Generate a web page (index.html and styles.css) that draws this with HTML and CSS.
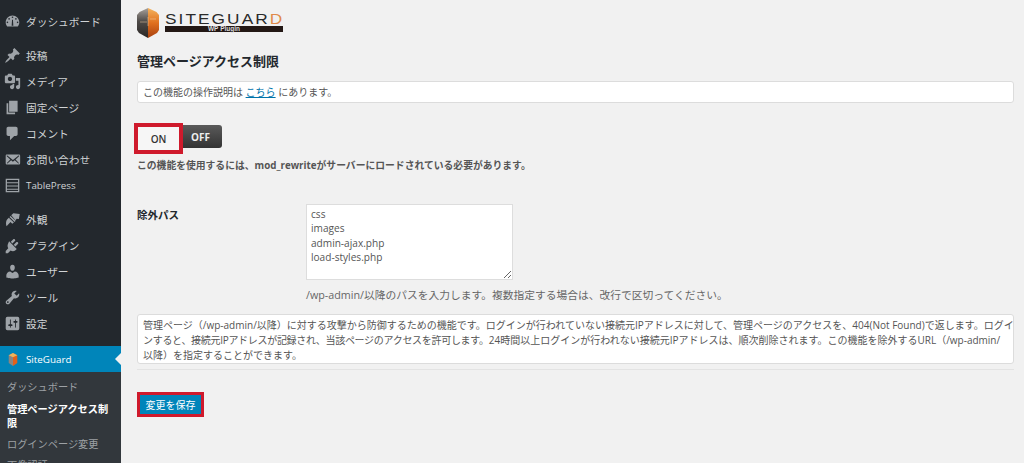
FILE: index.html
```html
<!DOCTYPE html>
<html lang="ja">
<head>
<meta charset="utf-8">
<title>SiteGuard</title>
<link rel="stylesheet" href="styles.css">
</head>
<body>
<div class="app">
<nav class="side">
  <ul class="menu first">
    <li><svg class="ic" viewBox="0 0 20 20"><path fill-rule="evenodd" d="M3.760 16h12.480c1.100-1.370 1.760-3.110 1.760-5 0-4.420-3.580-8-8-8s-8 3.580-8 8c0 1.890.66 3.630 1.760 5zM10 4c.55 0 1 .45 1 1s-.45 1-1 1-1-.45-1-1 .45-1 1-1zM6 6c.55 0 1 .45 1 1s-.45 1-1 1-1-.45-1-1 .45-1 1-1zm8 0c.55 0 1 .45 1 1s-.45 1-1 1-1-.45-1-1 .45-1 1-1zM4 10c.55 0 1 .45 1 1s-.45 1-1 1-1-.45-1-1 .45-1 1-1zm12 0c.55 0 1 .45 1 1s-.45 1-1 1-1-.45-1-1 .45-1 1-1zM9 15l.5-7h1l.5 7z"/></svg>ダッシュボード</li>
  </ul>
  <ul class="menu">
    <li><svg class="ic" viewBox="0 0 20 20"><path d="M10.440 3.020l1.820-1.820 6.360 6.350-1.830 1.820c-1.050-.68-2.480-.57-3.410.36l-.75.75c-.92.93-1.040 2.350-.35 3.400l-1.830 1.820-2.410-2.410-2.800 2.790c-.42.42-3.380 2.710-3.800 2.290s1.860-3.390 2.280-3.810l2.790-2.790L4.100 9.360l1.830-1.820c1.050.69 2.480.57 3.400-.36l.75-.75c.93-.92 1.050-2.350.36-3.410z"/></svg>投稿</li>
    <li><svg class="ic" viewBox="0 0 20 20"><path d="M13 11V4c0-.55-.45-1-1-1h-1.670L9 1H5L3.670 3H2c-.55 0-1 .45-1 1v7c0 .55.45 1 1 1h10c.55 0 1-.45 1-1zM7 4.500c1.380 0 2.500 1.120 2.500 2.500S8.380 9.500 7 9.500 4.500 8.380 4.500 7 5.620 4.500 7 4.500zM14 6h5v10.500c0 1.380-1.120 2.500-2.500 2.500S14 17.880 14 16.500s1.120-2.500 2.500-2.500c.17 0 .34.02.5.05V9h-3V6zm-4 8.050V13h2v3.500c0 1.380-1.120 2.500-2.500 2.500S7 17.880 7 16.500 8.120 14 9.500 14c.17 0 .34.02.5.05z"/></svg>メディア</li>
    <li><svg class="ic" viewBox="0 0 20 20"><path d="M6 15V2h10v13H6zm-1 1h8v2H3V5h2v11z"/></svg>固定ページ</li>
    <li><svg class="ic" viewBox="0 0 20 20"><path d="M5 2h9c1.100 0 2 .9 2 2v7c0 1.100-.9 2-2 2h-2l-5 5v-5H5c-1.100 0-2-.9-2-2V4c0-1.100.9-2 2-2z"/></svg>コメント</li>
    <li><svg class="ic" viewBox="0 0 20 20"><path d="M19 14.500v-9c0-.83-.67-1.500-1.500-1.500H3.490c-.83 0-1.500.67-1.500 1.500v9c0 .83.67 1.500 1.500 1.500H17.500c.83 0 1.500-.67 1.500-1.500zm-1.310-9.110c.33.33.15.67-.03.84L13.600 9.950l3.900 4.060c.12.14.2.36.06.51-.13.16-.43.15-.56.05l-4.370-3.730-2.140 1.950-2.130-1.950-4.370 3.730c-.13.1-.43.11-.56-.05-.14-.15-.06-.37.06-.51l3.900-4.060-4.060-3.720c-.18-.17-.36-.51-.03-.84s.67-.17.95.07l6.240 5.040 6.250-5.040c.28-.24.62-.4.95-.07z"/></svg>お問い合わせ</li>
    <li><svg class="ic" viewBox="0 0 20 20"><path fill-rule="evenodd" d="M2 2h16v16H2zm1.500 1.500v2.600h13V3.500zm0 3.800v2.600h13V7.300zm0 3.800v2.600h13v-2.600zm0 3.800v1.600h13v-1.600z"/></svg><span class="lat">TablePress</span></li>
  </ul>
  <ul class="menu">
    <li><svg class="ic" viewBox="0 0 20 20"><path d="M8.500 5L11 2.500l7.500 1-1 6-2.500-.5-1.500 2zM7.700 5.800l6 5.700-1.200 1.300-6-5.700zM5.700 8l6 5.600-2 1.400-2-2-4.700 5C1.500 13 3 10 5.700 8z"/></svg>外観</li>
    <li><svg class="ic" viewBox="0 0 20 20"><path d="M13.110 4.360L9.870 7.600 8 5.730l3.240-3.240c.35-.34 1.050-.2 1.560.31.52.51.66 1.210.31 1.560zM16.610 7.860L13.370 11.100 11.500 9.230l3.240-3.240c.35-.34 1.050-.2 1.560.31.52.51.66 1.210.31 1.560zM6 5l9 9-1.500 1.500c-1.700 1.400-4 1.500-5.700.4L4.500 19H2v-2.500l3-3.300C3.900 11.500 4 9 5 7.300z"/></svg>プラグイン</li>
    <li><svg class="ic" viewBox="0 0 20 20"><path d="M10 9.250c-2.270 0-2.730-3.440-2.730-3.440C7 4.020 7.820 2 9.970 2c2.160 0 2.980 2.020 2.710 3.810 0 0-.41 3.440-2.680 3.440zm0 2.570L12.720 10c2.390 0 4.520 2.330 4.520 4.530v2.490s-3.650 1.130-7.240 1.130c-3.650 0-7.240-1.130-7.240-1.130v-2.490c0-2.250 1.940-4.480 4.470-4.480z"/></svg>ユーザー</li>
    <li><svg class="ic" viewBox="0 0 20 20"><path fill-rule="evenodd" d="M16.680 9.770c-1.340 1.340-3.300 1.670-4.950.99l-5.410 6.520c-.99.99-2.590.99-3.580 0s-.99-2.590 0-3.570l6.520-5.420c-.68-1.650-.35-3.610.99-4.950 1.280-1.280 3.120-1.620 4.720-1.060l-2.890 2.890 2.820 2.820 2.860-2.870c.53 1.580.18 3.400-1.080 4.650zM3.810 16.210c.4.39 1.040.39 1.430 0 .4-.4.4-1.040 0-1.430-.39-.4-1.030-.4-1.430 0-.39.39-.39 1.030 0 1.430z"/></svg>ツール</li>
    <li><svg class="ic" viewBox="0 0 20 20"><path fill-rule="evenodd" d="M4 2h12a2 2 0 0 1 2 2v12a2 2 0 0 1-2 2H4a2 2 0 0 1-2-2V4a2 2 0 0 1 2-2zM8 11V5.500a.5.5 0 0 0-1 0V11H6a1 1 0 0 0 0 2h1v1.500a.5.5 0 0 0 1 0V13h1a1 1 0 0 0 0-2zm5-2v5.500a.5.5 0 0 0 1 0V9h1a1 1 0 0 0 0-2h-1V5.500a.5.5 0 0 0-1 0V7h-1a1 1 0 0 0 0 2z"/></svg>設定</li>
  </ul>
  <div class="current">
    <svg class="sg" viewBox="0 0 14 20"><path d="M7 1L1 4v11l6 4z" fill="#8a8580"/><path d="M7 1l6 3v11l-6 4z" fill="#e2601a"/><path d="M7 1L1 4l6 3 6-3z" fill="#f0b45a"/></svg>
    <span class="lat">SiteGuard</span>
    <i class="notch"></i>
  </div>
  <ul class="sub">
    <li>ダッシュボード</li>
    <li class="on">管理ページアクセス制限</li>
    <li>ログインページ変更</li>
    <li>画像認証</li>
  </ul>
</nav>
<main class="main">
  <div class="logo">
    <svg class="mark" viewBox="0 0 22 30">
      <defs>
        <linearGradient id="lg" x1="0" y1="0" x2="0" y2="1"><stop offset="0" stop-color="#a8a29c"/><stop offset=".45" stop-color="#4e4a47"/><stop offset="1" stop-color="#2a2725"/></linearGradient>
        <linearGradient id="rg" x1="0" y1="0" x2="0" y2="1"><stop offset="0" stop-color="#f4b45e"/><stop offset=".5" stop-color="#e0701e"/><stop offset="1" stop-color="#a8400f"/></linearGradient>
      </defs>
      <path d="M11 0L2.500 4 0 7v15l2 3 9 5z" fill="url(#lg)"/>
      <path d="M11 0l8.500 4L22 7v15l-2 3-9 5z" fill="url(#rg)"/>
      <path d="M3 14h7M11 9v9M13 11h6" stroke="#f3d2a8" stroke-width=".5" fill="none"/>
    </svg>
    <div class="brand">
      <div class="word">SITEGUAR<span>D</span></div>
      <div class="plug">WP Plugin</div>
    </div>
  </div>
  <h1 class="title">管理ページアクセス制限</h1>
  <div class="box note">この機能の操作説明は <a href="#">こちら</a> にあります。</div>
  <div class="toggle"><span class="on">ON</span><span class="off">OFF</span></div>
  <p class="warn">この機能を使用するには、mod_rewriteがサーバーにロードされている必要があります。</p>
  <div class="field">
    <div class="label">除外パス</div>
    <div class="ctl">
      <textarea class="ta" readonly>css
images
admin-ajax.php
load-styles.php</textarea>
      <p class="hint">/wp-admin/以降のパスを入力します。複数指定する場合は、改行で区切ってください。</p>
    </div>
  </div>
  <div class="box desc">管理ページ（/wp-admin/以降）に対する攻撃から防御するための機能です。ログインが行われていない接続元IPアドレスに対して、管理ページのアクセスを、404(Not Found)で返します。ログイ<br><span class="tight">ンすると、接続元IPアドレスが記録され、当該ページのアクセスを許可します。</span>24時間以上ログインが行われない接続元IPアドレスは、順次削除されます。この機能を除外するURL（/wp-admin/<br>以降）を指定することができます。</div>
  <div class="rule"></div>
  <button class="save" type="button">変更を保存</button>
</main>
</div>
</body>
</html>
```
FILE: styles.css
```css
*{box-sizing:border-box}
html,body{margin:0;height:463px;overflow:hidden}
body{background:#f1f1f1;font-family:"Open Sans","Noto Sans CJK JP",sans-serif;color:#444;font-size:10px}
.app{display:flex;height:463px;overflow:hidden}
.side{width:121px;flex:none;background:#23282d;color:#d0d3d5;font-size:10.700px;height:463px;overflow:hidden;display:flex;flex-direction:column}
.lat{font-size:9.800px}
.menu{list-style:none;margin:0 0 8px;padding:0}
.menu.first{padding-top:8px;margin-bottom:8px}
.menu li{height:26px;display:flex;align-items:center;gap:5px;padding-left:4px;white-space:nowrap}
.ic{width:17px;height:17px;fill:#9ea3a8;flex:none}
.current{position:relative;flex:none;height:26px;margin-top:2px;background:#0085ba;color:#fff;display:flex;align-items:center;padding-left:8px;gap:8px}
.sg{width:10px;height:15px}
.notch{position:absolute;right:0;top:7px;border:6px solid transparent;border-right-color:#f1f1f1;border-left:0}
.sub{list-style:none;margin:0;padding:8px 7px 0;background:#32373c;color:#9da1a5;font-size:10.200px;flex:1}
.sub li{line-height:14px;margin-bottom:7px}
.sub li.on{color:#fff;font-weight:700;margin-bottom:7px}
.sub li:first-child{margin-bottom:8px}
.main{flex:1;min-width:0;padding:8px 10px 0 16px}
.logo{display:flex;align-items:flex-start;gap:6px;height:30px}
.mark{width:22px;height:30px;flex:none}
.brand{width:118px;margin-top:5px}
.word{font:400 15px/11px "Liberation Sans",sans-serif;letter-spacing:1.800px;color:#2a2a2a;white-space:nowrap;transform:scaleX(1.150);transform-origin:left}
.word span{color:#e08a4a}
.plug{background:#231815;color:#ddd;font:700 6.500px/6px "Liberation Sans",sans-serif;height:6px;text-align:center;margin-top:2px}
.title{font-size:13px;line-height:18px;font-weight:700;color:#23282d;margin:14px 0 11px}
.box{background:#fff;border:1px solid #dcdcdc;border-radius:3px;color:#555;font-size:10px}
.note{height:22px;line-height:20px;padding-left:5px}
.note a{color:#0073aa;text-decoration:underline}
.toggle{display:flex;align-items:flex-start;width:84px;height:25px;margin:22px 0 0 1px;font-weight:700;font-size:10px}
.toggle span{display:flex;align-items:center;justify-content:center}
.toggle .on{width:41px;height:23px;margin-top:2px;background:#f6f6f6;color:#333;outline:4px solid #cf1a2c;position:relative;z-index:1;font-weight:600}
.toggle .off{width:43px;height:23px;background:linear-gradient(#5a5a5a,#333);color:#eee;border-radius:0 3px 3px 0}
.warn{margin:8px 0 0;font-size:9.800px;line-height:15px;font-weight:700;color:#555}
.field{display:flex;margin-top:31px}
.label{width:169px;flex:none;font-weight:700;font-size:10.500px;color:#23282d;line-height:20px;padding-top:1px;height:21px}
.ta{display:block;width:207px;height:76px;border:1px solid #ddd;background:#fff;color:#555;font:10.100px/14.400px "Open Sans",sans-serif;padding:2px 4px;margin:0;outline:0}
.hint{margin:7px 0 0;color:#666;font-size:10.750px;line-height:16px}
.desc{margin-top:11px;height:50px;padding:3px 5px;line-height:15px;white-space:nowrap}
.tight{letter-spacing:-.3px}
.rule{height:1px;background:#e3e3e3;margin-top:5px}
.save{display:block;margin:25px 0 0 3px;width:61px;height:19px;padding:0;background:#0085ba;color:#fff;border:0;outline:3px solid #cf1a2c;font:10px/19px "Noto Sans CJK JP",sans-serif}
```
